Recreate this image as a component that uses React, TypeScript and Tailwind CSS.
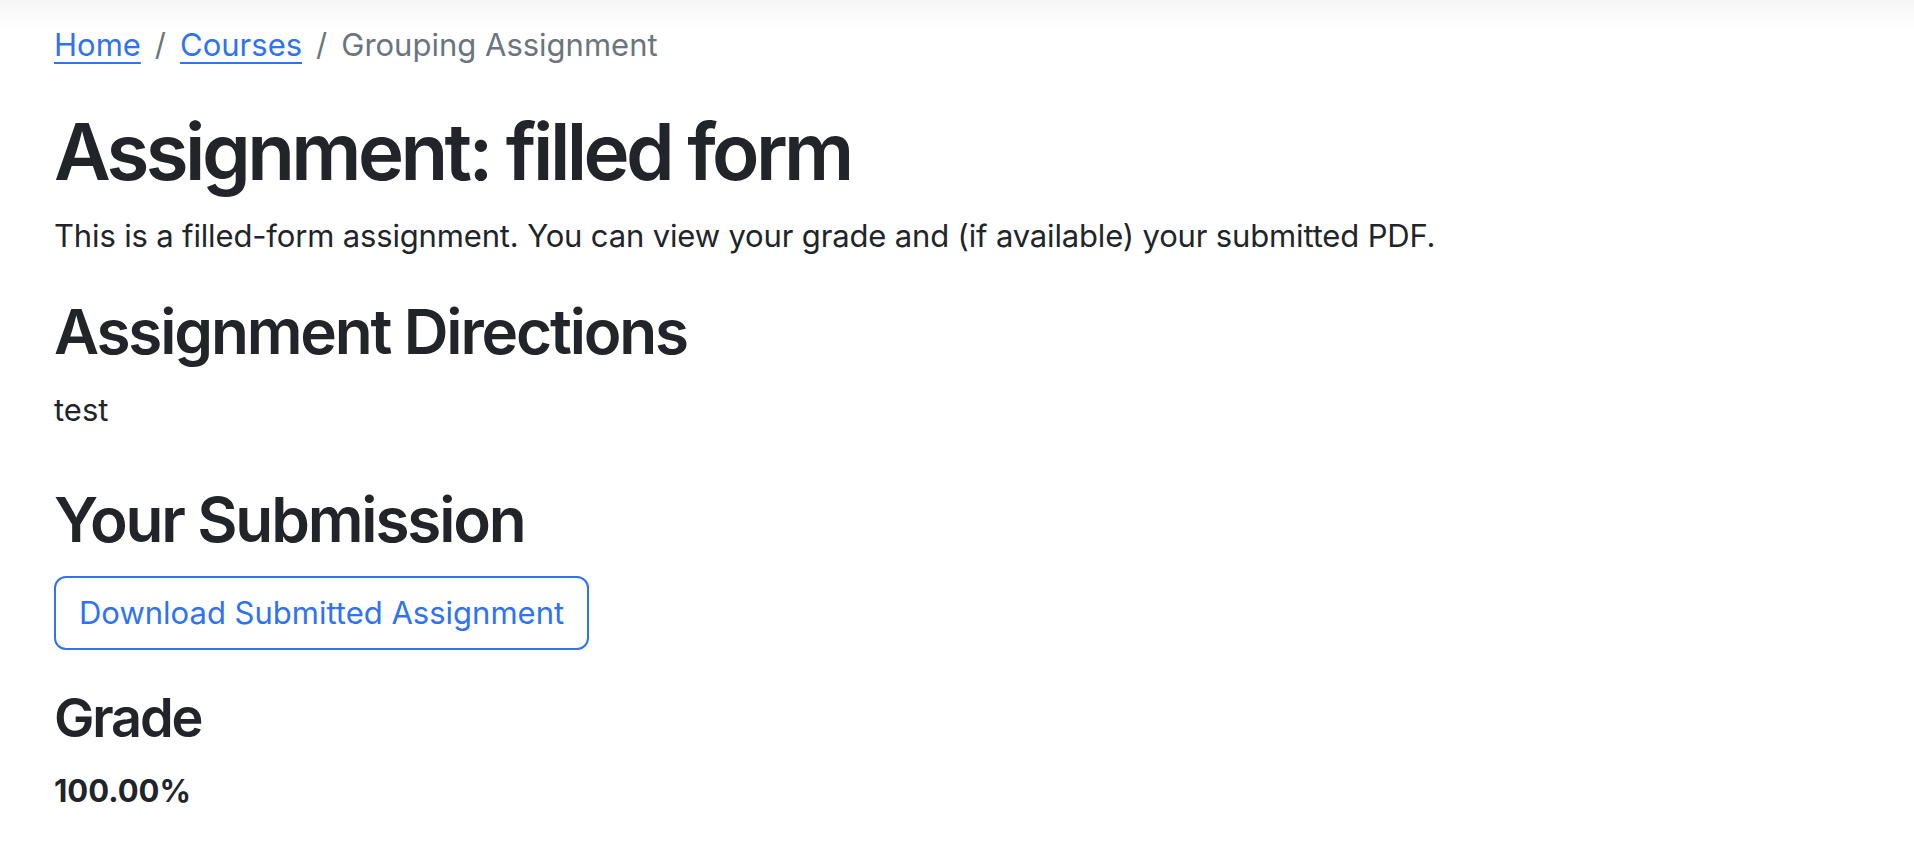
export default function App() {
  return (
    <div className="relative min-h-screen bg-white text-[#212529] font-['Inter',sans-serif]">
      {/* faint shadow under the (cropped) navbar */}
      <div className="absolute inset-x-0 top-0 h-[30px] bg-gradient-to-b from-[#f6f6f6] to-white" />

      <div className="relative px-[54px] pt-[22px]">
        <nav className="flex items-center text-[31px] leading-[46.5px]">
          <a href="#" className="text-[#2f72f2] underline underline-offset-[6px] decoration-2">Home</a>
          <span className="px-[14px] text-[#6c757d]">/</span>
          <a href="#" className="text-[#2f72f2] underline underline-offset-[6px] decoration-2">Courses</a>
          <span className="px-[14px] text-[#6c757d]">/</span>
          <span className="text-[#6c757d]">Grouping Assignment</span>
        </nav>

        <h1 className="mt-[36px] text-[78px] leading-[1.2] font-semibold tracking-[-0.046em]">Assignment: filled form</h1>
        <p className="mt-[15px] text-[31px] leading-[46.5px] tracking-[-0.005em]">
          This is a filled-form assignment. You can view your grade and (if available) your submitted PDF.
        </p>

        <h2 className="mt-[35px] text-[62px] leading-[1.2] font-semibold tracking-[-0.035em]">Assignment Directions</h2>
        <p className="mt-[18px] text-[31px] leading-[46.5px]">test</p>

        <h2 className="mt-[50px] text-[62px] leading-[1.2] font-semibold tracking-[-0.035em]">Your Submission</h2>
        <button className="mt-[18px] rounded-[12px] border-2 border-[#2f72f2] px-[23px] py-[12px] text-[31px] leading-[46.5px] text-[#2f72f2]">
          Download Submitted Assignment
        </button>

        <h3 className="mt-[36px] text-[54px] leading-[1.2] font-semibold tracking-[-0.04em]">Grade</h3>
        <p className="mt-[17px] text-[31px] leading-[46.5px] font-bold">100.00%</p>
      </div>
    </div>
  )
}
